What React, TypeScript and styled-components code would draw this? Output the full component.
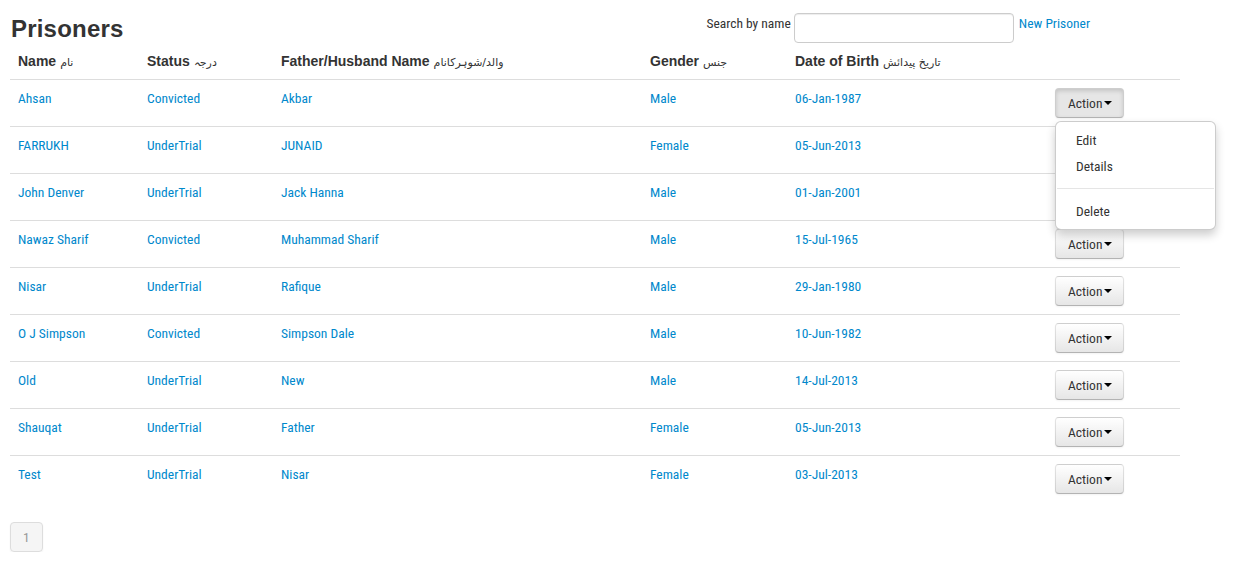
import React from "react";
import styled, { createGlobalStyle, css } from "styled-components";

const GlobalStyle = createGlobalStyle`
  html, body { margin: 0; padding: 0; background: #fff; }
  body {
    font-family: "Roboto Condensed", Roboto, "Liberation Sans", sans-serif;
    font-stretch: condensed;
    font-weight: 400;
    font-size: 13.5px;
    line-height: 20px;
    color: #333;
  }
  * { box-sizing: border-box; }
`;

const Page = styled.div`
  padding: 0 10px;
  width: 1190px;
`;

const Header = styled.header`
  display: flex;
  align-items: flex-start;
  height: 43px;
  padding-top: 13px;
`;

const Title = styled.h1`
  margin: 0 0 0 1px;
  font-family: "Liberation Sans", Arial, sans-serif;
  font-stretch: normal;
  font-size: 24px;
  letter-spacing: 0.2px;
  font-weight: bold;
  line-height: 32px;
  color: #333;
`;

const SearchGroup = styled.div`
  margin-left: auto;
  margin-right: 90px;
  display: flex;
  align-items: flex-start;
`;

const Label = styled.label`
  line-height: 20px;
  margin-right: 3px;
  color: #333;
`;

const SearchInput = styled.input`
  width: 220px;
  height: 30px;
  padding: 4px 6px;
  border: 1px solid #ccc;
  border-radius: 4px;
  box-shadow: inset 0 1px 1px rgba(0, 0, 0, 0.075);
  font: inherit;
  outline: none;
`;

const Link = styled.a`
  color: #0088cc;
  text-decoration: none;
  cursor: pointer;
`;

const NewLink = styled(Link)`
  margin-left: 5px;
  line-height: 20px;
`;

const Table = styled.table`
  width: 1170px;
  border-collapse: collapse;
  border-spacing: 0;
`;

const Th = styled.th<{ $w: number }>`
  width: ${(p) => p.$w}px;
  height: 36px;
  padding: 8px;
  text-align: left;
  vertical-align: bottom;
  line-height: 20px;
  font-family: "Liberation Sans", Arial, sans-serif;
  font-stretch: normal;
  font-size: 14px;
  font-weight: bold;
  color: #333;
  white-space: nowrap;
`;

const Urdu = styled.span`
  font-family: "DejaVu Sans", sans-serif;
  font-size: 11px;
  line-height: 1;
  font-weight: normal;
  margin-left: 4px;
`;

const Td = styled.td`
  padding: 8px;
  line-height: 20px;
  vertical-align: top;
  border-top: 1px solid #ddd;
`;

const ActionWrap = styled.div`
  position: relative;
  display: inline-block;
`;

const ActionButton = styled.button<{ $open?: boolean }>`
  display: inline-flex;
  align-items: center;
  height: 30px;
  padding: 4px 11px 4px 12px;
  font: inherit;
  line-height: 20px;
  color: #333;
  cursor: pointer;
  border: 1px solid #ccc;
  border-color: rgba(0, 0, 0, 0.1) rgba(0, 0, 0, 0.1) rgba(0, 0, 0, 0.25);
  border-bottom-color: #b3b3b3;
  border-radius: 4px;
  background-color: #f5f5f5;
  background-image: linear-gradient(to bottom, #ffffff, #e6e6e6);
  box-shadow: inset 0 1px 0 rgba(255, 255, 255, 0.2), 0 1px 2px rgba(0, 0, 0, 0.05);
  ${(p) =>
    p.$open &&
    css`
      background-image: none;
      background-color: #e6e6e6;
      box-shadow: inset 0 2px 4px rgba(0, 0, 0, 0.15), 0 1px 2px rgba(0, 0, 0, 0.05);
    `}
`;

const Caret = styled.span`
  display: inline-block;
  width: 0;
  height: 0;
  margin-left: 2px;
  border-top: 4px solid #000;
  border-left: 4px solid transparent;
  border-right: 4px solid transparent;
`;

const Menu = styled.ul`
  position: absolute;
  top: 100%;
  left: 0;
  z-index: 10;
  width: 161px;
  margin: 3px 0 0;
  padding: 5px 0;
  list-style: none;
  background: #fff;
  border: 1px solid rgba(0, 0, 0, 0.2);
  border-radius: 6px;
  box-shadow: 0 5px 10px rgba(0, 0, 0, 0.2);
`;

const MenuItem = styled.li`
  padding: 3px 20px;
  line-height: 20px;
  color: #333;
  white-space: nowrap;
`;

const Divider = styled.li`
  height: 1px;
  margin: 9px 1px;
  background: #e5e5e5;
`;

const Pagination = styled.ul`
  display: inline-flex;
  margin: 20px 0 0;
  padding: 0;
  list-style: none;
  border-radius: 4px;
  box-shadow: 0 1px 2px rgba(0, 0, 0, 0.05);
`;

const PageItem = styled.li`
  padding: 4px 12px;
  line-height: 20px;
  border: 1px solid #ddd;
  border-radius: 4px;
  background: #f5f5f5;
  color: #999;
`;

const columns = [
  { label: "Name", urdu: "نام", w: 129 },
  { label: "Status", urdu: "درجہ", w: 134 },
  { label: "Father/Husband Name", urdu: "والد/شوہرکانام", w: 369 },
  { label: "Gender", urdu: "جنس", w: 145 },
  { label: "Date of Birth", urdu: "تاریخ پیدائش", w: 260 },
  { label: "", urdu: "", w: 133 },
];

const rows = [
  ["Ahsan", "Convicted", "Akbar", "Male", "06-Jan-1987"],
  ["FARRUKH", "UnderTrial", "JUNAID", "Female", "05-Jun-2013"],
  ["John Denver", "UnderTrial", "Jack Hanna", "Male", "01-Jan-2001"],
  ["Nawaz Sharif", "Convicted", "Muhammad Sharif", "Male", "15-Jul-1965"],
  ["Nisar", "UnderTrial", "Rafique", "Male", "29-Jan-1980"],
  ["O J Simpson", "Convicted", "Simpson Dale", "Male", "10-Jun-1982"],
  ["Old", "UnderTrial", "New", "Male", "14-Jul-2013"],
  ["Shauqat", "UnderTrial", "Father", "Female", "05-Jun-2013"],
  ["Test", "UnderTrial", "Nisar", "Female", "03-Jul-2013"],
];

export default function App() {
  return (
    <>
      <GlobalStyle />
      <Page>
        <Header>
          <Title>Prisoners</Title>
          <SearchGroup>
            <Label>Search by name</Label>
            <SearchInput type="text" />
            <NewLink>New Prisoner</NewLink>
          </SearchGroup>
        </Header>
        <Table>
          <thead>
            <tr>
              {columns.map((c, i) => (
                <Th key={i} $w={c.w}>
                  {c.label}
                  {c.urdu && <Urdu>{c.urdu}</Urdu>}
                </Th>
              ))}
            </tr>
          </thead>
          <tbody>
            {rows.map((r, i) => (
              <tr key={i}>
                {r.map((v, j) => (
                  <Td key={j}>
                    <Link>{v}</Link>
                  </Td>
                ))}
                <Td>
                  <ActionWrap>
                    <ActionButton $open={i === 0}>
                      Action
                      <Caret />
                    </ActionButton>
                    {i === 0 && (
                      <Menu>
                        <MenuItem>Edit</MenuItem>
                        <MenuItem>Details</MenuItem>
                        <Divider />
                        <MenuItem>Delete</MenuItem>
                      </Menu>
                    )}
                  </ActionWrap>
                </Td>
              </tr>
            ))}
          </tbody>
        </Table>
        <Pagination>
          <PageItem>1</PageItem>
        </Pagination>
      </Page>
    </>
  );
}
